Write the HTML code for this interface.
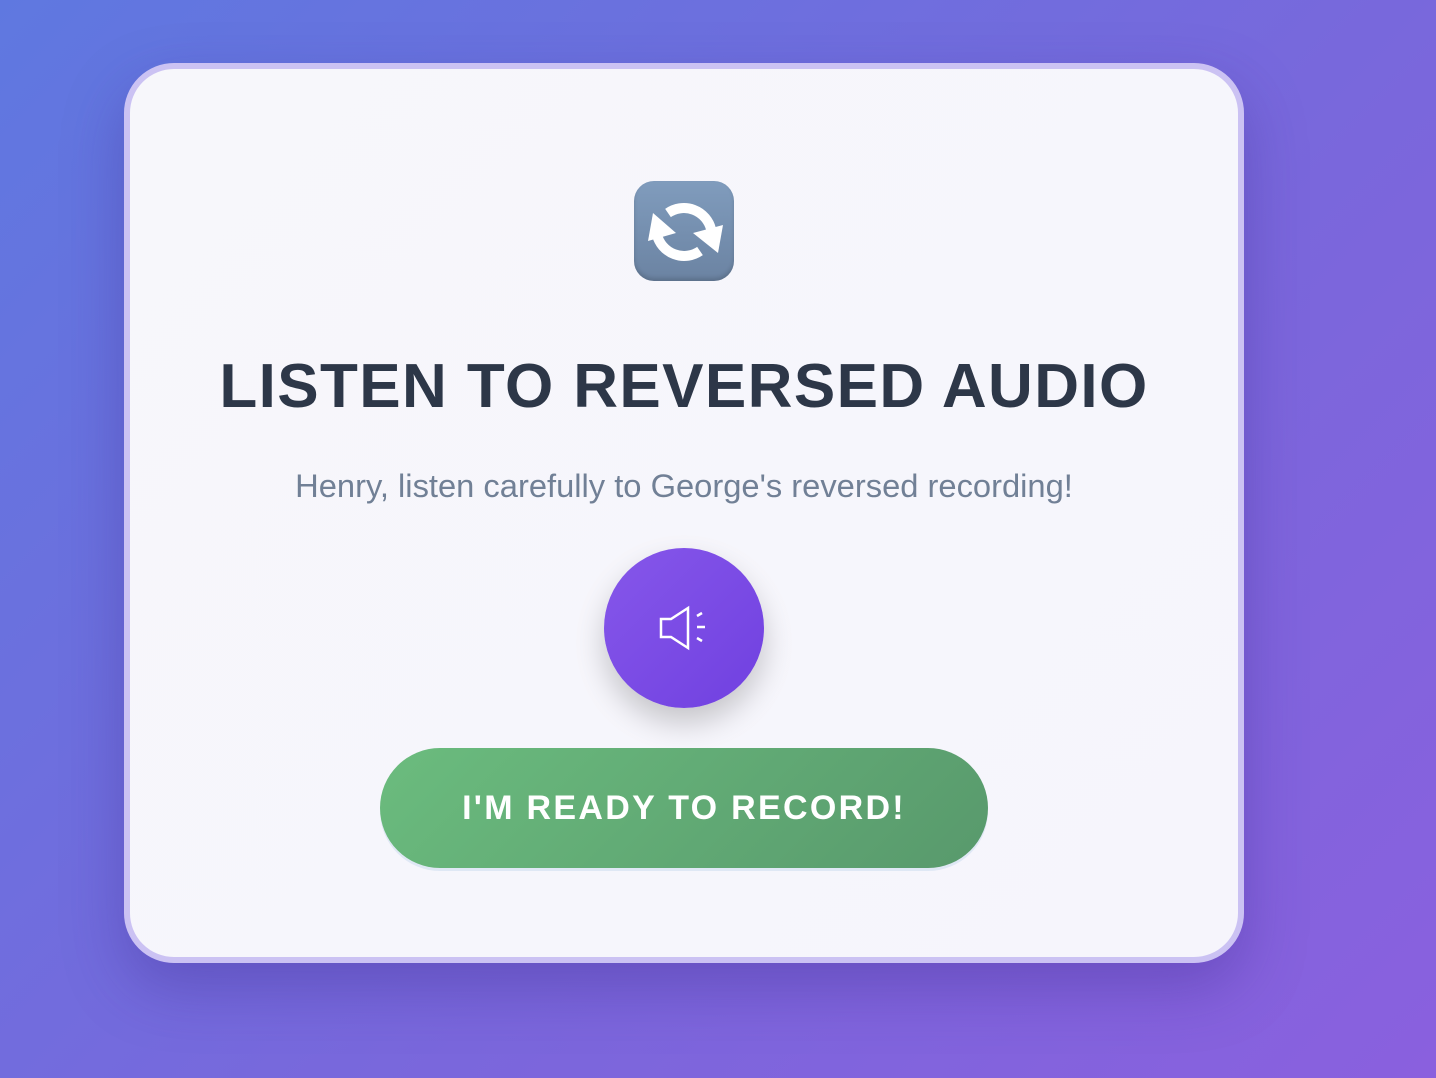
<!DOCTYPE html>
<html><head><style>
html,body{margin:0;width:1436px;height:1078px;overflow:hidden}
body{background:linear-gradient(135deg,#5f78e0 0%,#7a67dc 60%,#8a60de 100%);font-family:"Liberation Sans",sans-serif;position:relative}
.card{position:absolute;left:124px;top:63px;width:1108px;height:888px;border:6px solid #cbc2f3;border-radius:50px;background:linear-gradient(135deg,#f7f7fb,#f6f5fc);box-shadow:0 25px 60px rgba(60,40,140,.35)}
.emoji{position:absolute;left:504px;top:112px;width:100px;height:100px;border-radius:20px;background:linear-gradient(#809cbd,#6b83a2);box-shadow:inset 0 -3px 4px rgba(0,0,0,.15)}
h1{position:absolute;left:0;right:0;top:282px;margin:0;text-align:center;font-size:62px;font-weight:bold;color:#2d3748;letter-spacing:1.4px}
.sub{position:absolute;left:0;right:0;top:398px;text-align:center;font-size:32.7px;color:#718096}
.play{position:absolute;left:474px;top:479px;width:160px;height:160px;border-radius:50%;background:linear-gradient(135deg,#8657ea,#7040e0);box-shadow:0 15px 30px rgba(0,0,0,.2)}
.btn{position:absolute;left:250px;top:679px;width:608px;height:120px;border-radius:60px;background:linear-gradient(135deg,#6bbc7e,#58996c);box-shadow:0 3px 0 #dfe8f5;color:#fff;font-weight:bold;font-size:34px;letter-spacing:2.3px;text-align:center;line-height:120px}
</style></head><body>
<div class="card">
<div class="emoji"><svg width="100" height="100" viewBox="0 0 100 100" fill="none" stroke="#fff" stroke-width="10">
<path d="M77 48 A28 28 0 0 0 34 32"/><path d="M23 54 A28 28 0 0 0 66 70"/>
<path d="M19 32 L14 60 L42 52 Z" fill="#fff" stroke="none"/><path d="M84 72 L89 44 L59 52 Z" fill="#fff" stroke="none"/></svg></div>
<h1>LISTEN TO REVERSED AUDIO</h1>
<div class="sub">Henry, listen carefully to George's reversed recording!</div>
<div class="play"><svg width="160" height="160" viewBox="0 0 160 160" fill="none" stroke="#fff" stroke-width="2.5"><path d="M57 71 H67 L84 60 V100 L67 89 H57 Z"/><path d="M93 68 L98 65 M93 79 H101 M93 90 L98 93"/></svg></div>
<div class="btn">I'M READY TO RECORD!</div>
</div>
</body></html>
